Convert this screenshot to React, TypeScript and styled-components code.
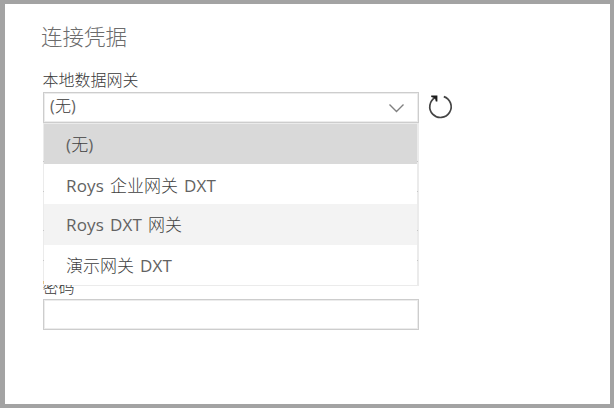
import React from "react";
import styled, { createGlobalStyle } from "styled-components";

const GlobalStyle = createGlobalStyle`
  * { box-sizing: border-box; }
  body {
    margin: 0;
    background: #a3a3a3;
    font-family: "Open Sans", "Noto Sans CJK SC", sans-serif;
    color: #5c5c5c;
  }
`;

const Dialog = styled.main`
  width: 614px;
  height: 408px;
  border: solid #a3a3a3;
  border-width: 4px 4px 4px 5px;
  background: #fff;
  padding: 18px 0 0 38px;
  overflow: hidden;
`;

const Title = styled.h1`
  margin: 0 0 0 -2px;
  height: 48px;
  font-size: 21.5px;
  line-height: 29px;
  font-weight: 300;
  color: #6c6c6c;
  white-space: nowrap;
`;

const Label = styled.label`
  display: block;
  height: 18px;
  margin-left: -0.5px;
  font-size: 16px;
  line-height: 20px;
  font-weight: 300;
  color: #383838;
  white-space: nowrap;
`;

const GatewayRow = styled.div`
  display: flex;
  margin-top: 4px;
`;

const SelectWrap = styled.div`
  position: relative;
  width: 376px;
  height: 31px;
`;

const SelectBox = styled.button`
  display: flex;
  align-items: center;
  justify-content: space-between;
  width: 100%;
  height: 31px;
  padding: 0 12px 2px 6px;
  border: 1px solid #cdcdcd;
  box-shadow: inset 0 0 0 1px #ececec;
  background: #fff;
  font: inherit;
  font-size: 16px;
  font-weight: 300;
  color: #383838;
`;

const Value = styled.span`
  line-height: 20px;
  margin-top: -1px;
`;

const Chevron = styled.svg`
  margin-top: 3px;
`;

const Menu = styled.ul`
  position: absolute;
  z-index: 1;
  top: 31px;
  left: 0;
  width: 376px;
  height: 163px;
  margin: 0;
  padding: 0;
  list-style: none;
  border: solid rgba(0, 0, 0, 0.08);
  border-width: 1px 2px 2px 1px;
  background: #fff;
  background-clip: padding-box;
`;

const Option = styled.li<{ $tone?: string; $leading?: number; $height?: number }>`
  height: ${(p) => p.$height ?? 40}px;
  padding-left: 22px;
  font-size: 17px;
  line-height: ${(p) => p.$leading ?? 41}px;
  font-weight: 300;
  color: #404040;
  background: ${(p) => p.$tone ?? "#fff"};
  white-space: nowrap;
  word-spacing: 1.5px;
`;

const Latin = styled.span`
  font-weight: 400;
  letter-spacing: 0.15px;
  color: #626262;
`;

const RefreshButton = styled.button`
  width: 26px;
  height: 28px;
  margin-left: 9px;
  padding: 0;
  border: 0;
  background: none;
`;

const CoveredFields = styled.div`
  display: grid;
  gap: 38px;
  margin-top: 38px;
`;

const CoveredField = styled.div`
  width: 375px;
  height: 31px;
  border: solid #d8d8d8;
  border-width: 1px 0;
`;

const PasswordField = styled.div`
  margin-top: 16px;
`;

const Input = styled.input`
  display: block;
  width: 376px;
  height: 31px;
  margin-top: 4px;
  border: 1px solid #cdcdcd;
  box-shadow: inset 0 0 0 1px #ececec;
  border-radius: 0;
  background: #fff;
`;

const options = [
  { text: "(无)", tone: "#d9d9d9" },
  { text: "Roys 企业网关 DXT", leading: 43 },
  { text: "Roys DXT 网关", tone: "#f3f3f3", height: 41 },
  { text: "演示网关 DXT" },
];

function MixedText({ text }: { text: string }) {
  return (
    <>
      {text
        .split(/([\x20-\x7e]+)/)
        .filter(Boolean)
        .map((part, i) => (/^[\x20-\x7e]/.test(part) ? <Latin key={i}>{part}</Latin> : part))}
    </>
  );
}

export default function App() {
  return (
    <>
      <GlobalStyle />
      <Dialog>
        <Title>连接凭据</Title>
        <Label>本地数据网关</Label>
        <GatewayRow>
          <SelectWrap>
            <SelectBox aria-expanded="true">
              <Value>
                <MixedText text="(无)" />
              </Value>
              <Chevron width="18" height="12" viewBox="0 0 18 12" fill="none" stroke="#808080" strokeWidth="1.4">
                <path d="M1.5 2.5l7 7 7-7" />
              </Chevron>
            </SelectBox>
            <Menu>
              {options.map((o) => (
                <Option key={o.text} $tone={o.tone} $leading={o.leading} $height={o.height}>
                  <MixedText text={o.text} />
                </Option>
              ))}
            </Menu>
          </SelectWrap>
          <RefreshButton aria-label="刷新">
            <svg width="26" height="28" viewBox="0 0 26 28" fill="none">
              <path d="M15.8 4.6A10.7 10.7 0 1 1 7.3 5.4" stroke="#444" strokeWidth="1.7" />
              <path d="M3.2 3.4h6.2v6H7.8L7 6.2 3.2 5z" fill="#1c1c1c" />
            </svg>
          </RefreshButton>
        </GatewayRow>
        <CoveredFields>
          <CoveredField />
          <CoveredField />
        </CoveredFields>
        <PasswordField>
          <Label htmlFor="password">密码</Label>
          <Input id="password" type="password" />
        </PasswordField>
      </Dialog>
    </>
  );
}
